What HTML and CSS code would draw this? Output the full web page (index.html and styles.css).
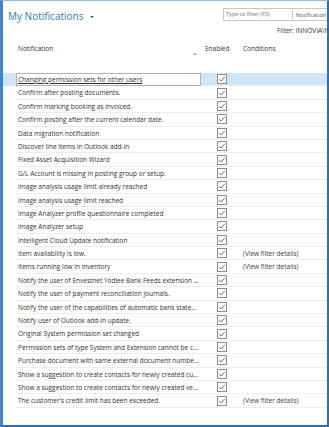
FILE: index.html
```html
<!DOCTYPE html>
<html lang="en">
<head>
  <meta charset="UTF-8" />
  <title>My Notifications</title>
  <link rel="stylesheet" href="styles.css">
</head>
<body>
  <div id="window">
    <div class="title-bar">
      <h1>My Notifications</h1>
      <span class="title-caret"></span>
      <div class="filter-box">
        <span class="filter-hint">Type to filter (F3)</span>
        <span class="filter-field">Notification</span>
      </div>
    </div>
    <div class="filter-line">Filter: INNOVIA\N</div>

    <div class="grid">
      <div class="grid-head">
        <div class="cell sel"></div>
        <div class="cell col-name">Notification<span class="sort-arrow"></span></div>
        <div class="cell col-enabled">Enabled</div>
        <div class="cell col-cond">Conditions</div>
      </div>
      <div id="rows"></div>
    </div>
  </div>

  <script>
    const notifications = [
      ['Changing permission sets for other users', ''],
      ['Confirm after posting documents.', ''],
      ['Confirm marking booking as invoiced.', ''],
      ['Confirm posting after the current calendar date.', ''],
      ['Data migration notification', ''],
      ['Discover line items in Outlook add-in', ''],
      ['Fixed Asset Acquisition Wizard', ''],
      ['G/L Account is missing in posting group or setup.', ''],
      ['Image analysis usage limit already reached', ''],
      ['Image analysis usage limit reached', ''],
      ['Image Analyzer profile questionnaire completed', ''],
      ['Image Analyzer setup', ''],
      ['Intelligent Cloud Update notification', ''],
      ['Item availability is low.', '(View filter details)'],
      ['Items running low in inventory', '(View filter details)'],
      ['Notify the user of Envestnet Yodlee Bank Feeds extension ...', ''],
      ['Notify the user of payment reconciliation journals.', ''],
      ['Notify the user of the capabilities of automatic bank state...', ''],
      ['Notify user of Outlook add-in update.', ''],
      ['Original System permission set changed', ''],
      ['Permission sets of type System and Extension cannot be c...', ''],
      ['Purchase document with same external document numbe...', ''],
      ['Show a suggestion to create contacts for newly created cu...', ''],
      ['Show a suggestion to create contacts for newly created ve...', ''],
      ["The customer's credit limit has been exceeded.", '(View filter details)']
    ];

    const checkbox = '<svg width="10" height="10" viewBox="0 0 10 10">' +
      '<rect x="0.5" y="0.5" width="9" height="9" fill="#fff" stroke="#8e8e8e"/>' +
      '<path d="M2.3 5.1 L4.2 7 L7.9 2.7" fill="none" stroke="#5a5a5a" stroke-width="0.9"/></svg>';

    const rows = document.getElementById('rows');
    notifications.forEach(([name, cond], i) => {
      const row = document.createElement('div');
      row.className = i === 0 ? 'row selected' : 'row';
      row.innerHTML =
        '<div class="cell sel"></div>' +
        '<div class="cell col-name"><span class="name">' + name + '</span></div>' +
        '<div class="cell col-enabled">' + checkbox + '</div>' +
        '<div class="cell col-cond">' + cond + '</div>';
      rows.appendChild(row);
    });
  </script>
</body>
</html>
```

FILE: styles.css
```css
body {
  margin: 0;
  width: 329px;
  height: 427px;
  overflow: hidden;
  background: #fff;
  font-family: "Open Sans", "Noto Sans", sans-serif;
  font-size: 6.5px;
  color: #303030;
}

#window {
  box-sizing: border-box;
  height: 427px;
  border-top: 1px solid #8fbce6;
  border-left: 3px solid #4283c9;
  border-right: 2px solid #2f6cb0;
  border-bottom: 2px solid #2f6cb0;
  overflow: hidden;
}

.title-bar {
  display: flex;
  align-items: flex-start;
  height: 23px;
}

h1 {
  margin: 8px 0 0 5px;
  font-size: 10px;
  line-height: 14px;
  font-weight: 400;
  color: #2f78bf;
  white-space: nowrap;
}

.title-caret {
  margin: 15px 0 0 7px;
  width: 0;
  height: 0;
  border-left: 2px solid transparent;
  border-right: 2px solid transparent;
  border-top: 2px solid #555;
}

.filter-box {
  display: flex;
  align-items: center;
  margin: 7px 0 0 auto;
  width: 104px;
  height: 13px;
  box-sizing: border-box;
  border: 1px solid #c6c6c6;
  border-right: none;
  white-space: nowrap;
  overflow: hidden;
  font-size: 5.6px;
  color: #707070;
}

.filter-hint {
  padding: 0 3px 0 2px;
  width: 69px;
  flex: none;
  box-sizing: border-box;
  border-right: 1px solid #c6c6c6;
  line-height: 9px;
}

.filter-field {
  padding-left: 3px;
  color: #555;
}

.filter-line {
  height: 14px;
  line-height: 14px;
  padding-left: 274px;
  white-space: nowrap;
  overflow: hidden;
  color: #333;
}

.grid-head,
.row {
  display: flex;
}

.grid-head {
  height: 35px;
  padding-top: 7px;
  box-sizing: border-box;
  line-height: 8px;
  color: #333;
}

.cell {
  flex: none;
  white-space: nowrap;
  overflow: hidden;
}

.sel {
  width: 13px;
}

.col-name {
  width: 185px;
  padding-left: 2px;
  box-sizing: border-box;
  position: relative;
}

.col-enabled {
  width: 39px;
  padding-left: 4px;
  box-sizing: border-box;
}

.col-cond {
  flex: 1;
  padding-left: 3px;
}

.grid-head .col-name,
.grid-head .col-enabled,
.grid-head .col-cond {
  height: 28px;
}

.sort-arrow {
  position: absolute;
  right: 4px;
  top: 8px;
  width: 0;
  height: 0;
  border-left: 2px solid transparent;
  border-right: 2px solid transparent;
  border-bottom: 2px solid #999;
}

.row {
  height: 13.4px;
  line-height: 13px;
}

.row .col-name,
.row .col-enabled,
.row .col-cond {
  border-bottom: 1px solid #ededed;
  box-sizing: border-box;
}

.row .col-enabled {
  display: flex;
  align-items: center;
  padding-left: 16px;
}

.row .col-cond {
  color: #404040;
}

.row.selected {
  background: #cfe6f8;
}

.row.selected .col-name {
  background: #fff;
  border: 1px solid #a3b4c4;
  padding-left: 1px;
  line-height: 11px;
}

.row.selected .name {
  text-decoration: underline;
}
```
